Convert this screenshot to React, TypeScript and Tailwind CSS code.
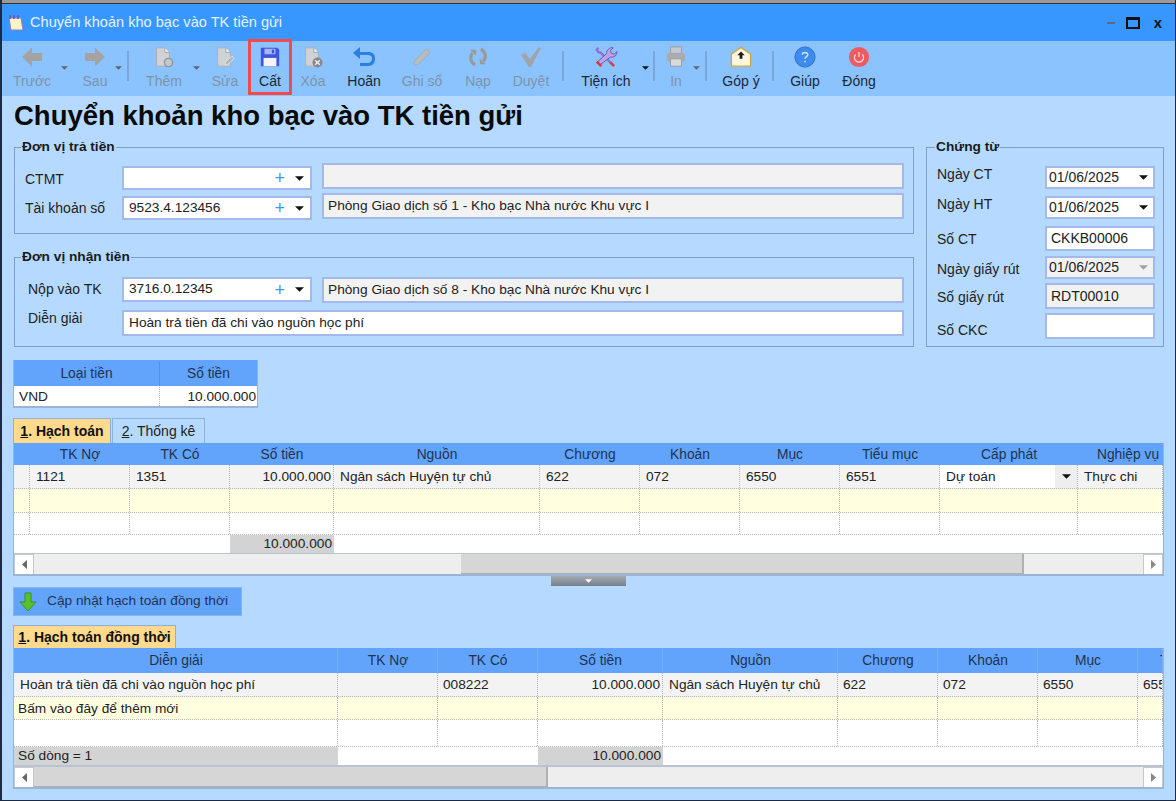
import type { ReactNode } from "react";

const GRAY = "#a3a3a3";

function Caret({ color = "#222", w = 10, h = 5 }: { color?: string; w?: number; h?: number }) {
  return (
    <svg width={w} height={h} viewBox="0 0 10 5" className="shrink-0">
      <polygon points="0,0 10,0 5,5" fill={color} />
    </svg>
  );
}

function DocIcon({ badge }: { badge: ReactNode }) {
  return (
    <svg width="26" height="24" viewBox="0 0 26 24">
      <path d="M5 2h9l5 5v15H5z" fill="#cfd3d6" stroke="#a8adb2" />
      <path d="M14 2v5h5" fill="#f2f2f2" stroke="#9ea3a8" />
      {badge}
    </svg>
  );
}

const icons: Record<string, ReactNode> = {
  back: (
    <svg width="24" height="22" viewBox="0 0 24 22">
      <path d="M2 11 12 1.500V7h10v8H12v5.500z" fill={GRAY} />
    </svg>
  ),
  next: (
    <svg width="24" height="22" viewBox="0 0 24 22">
      <path d="M22 11 12 1.500V7H2v8h10v5.500z" fill={GRAY} />
    </svg>
  ),
  add: <DocIcon badge={<circle cx="18" cy="18" r="4.500" fill="#c4c8cb" stroke="#8f9498" strokeWidth="1.500" />} />,
  edit: <DocIcon badge={<path d="m13 21 1-4 7-6 2 3-7 6z" fill="#b5b5b5" stroke="#e0e0e0" />} />,
  save: (
    <svg width="24" height="24" viewBox="0 0 24 24">
      <path d="M2 2h18l2 2v18H2z" fill="#3d55e0" />
      <rect x="6" y="3" width="12" height="6" fill="#a8b6f2" />
      <rect x="14" y="4" width="2.500" height="4" fill="#3d55e0" />
      <rect x="5" y="13" width="14" height="9" fill="#f3f3f8" />
    </svg>
  ),
  del: (
    <DocIcon
      badge={
        <g>
          <circle cx="18" cy="18" r="5.500" fill="#85898d" />
          <path d="m15.500 15.500 5 5m0-5-5 5" stroke="#eee" strokeWidth="1.500" />
        </g>
      }
    />
  ),
  undo: (
    <svg width="24" height="22" viewBox="0 0 24 22">
      <path d="M8 1 1 7l7 6V9h8c3 0 4 1.500 4 3.500S19 17 16 17H8v3h8c5 0 7-3.500 7-7.500S21 6 16 6H8z" fill="#2a7fe0" />
    </svg>
  ),
  post: (
    <svg width="24" height="24" viewBox="0 0 24 24">
      <path d="M17 3l4 4L8 20l-5 1 1-5z" fill="#b9bcbf" stroke="#a5a8ab" />
    </svg>
  ),
  reload: (
    <svg width="24" height="24" viewBox="0 0 24 24" fill="none" stroke="#999" strokeWidth="3.500">
      <path d="M9 20.500C4 18 2.500 12 6 7.500" />
      <path d="M15 3.500c5 2.500 6.500 8.500 3 13" />
      <path d="M3.500 4h6.500v6.500z" fill="#999" stroke="none" />
      <path d="M20.500 20h-6.500v-6.500z" fill="#999" stroke="none" />
    </svg>
  ),
  check: (
    <svg width="24" height="22" viewBox="0 0 24 22">
      <path d="M2 9l4-2 5 6 9-12 2 1-10 19h-2z" fill="#a0a4a8" />
    </svg>
  ),
  tools: (
    <svg width="26" height="24" viewBox="0 0 26 24">
      <path d="M5 2 3 4l2 3 2 0L20 20" stroke="#8d6fc9" strokeWidth="2.500" fill="none" />
      <path d="m19 17 4 4-2 2-4-4z" fill="#d64545" />
      <path d="M21 2l-3 3 1 3 3 1 3-3c0 4-3 7-7 6L6 21 3 18 14 8c-1-3 3-7 7-6z" fill="#b9a5e6" stroke="#6d4fb0" />
      <path d="m4 16 5 5-2 2-5-5z" fill="#d93a3a" />
    </svg>
  ),
  print: (
    <svg width="24" height="24" viewBox="0 0 24 24">
      <rect x="6" y="1" width="12" height="7" fill="#c6c9cc" stroke="#989c9f" />
      <rect x="2" y="8" width="20" height="9" rx="1" fill="#a9adb0" />
      <rect x="6" y="14" width="12" height="8" fill="#d8dadc" stroke="#989c9f" />
    </svg>
  ),
  mail: (
    <svg width="24" height="24" viewBox="0 0 24 24">
      <path d="M1.500 9 12 1.500 22.500 9v13h-21z" fill="#fdf6dc" stroke="#cfa93e" strokeWidth="1.500" />
      <path d="M12 6l4 4h-2.500v4h-3v-4H8z" fill="#1b1b1b" />
    </svg>
  ),
  help: (
    <svg width="24" height="24" viewBox="0 0 24 24">
      <circle cx="12" cy="12" r="11" fill="#3d8bec" stroke="#2d6fc4" />
      <path d="M9 9.500C9 7.500 10.500 7 12 7s3 .8 3 2.500-3 2.500-3 4.500" fill="none" stroke="#cfe2fb" strokeWidth="1.600" />
      <circle cx="12" cy="17" r="1" fill="#cfe2fb" />
    </svg>
  ),
  off: (
    <svg width="24" height="24" viewBox="0 0 24 24">
      <circle cx="12" cy="12" r="11" fill="#ee5a5e" />
      <path d="M8.500 9a5 5 0 1 0 7 0M12 6.500V12" fill="none" stroke="#fbd5d6" strokeWidth="1.400" />
    </svg>
  ),
};

type ToolItem =
  | { kind: "btn"; w: number; label: string; icon: string; on?: boolean; mark?: boolean }
  | { kind: "arrow"; w: number; dark?: boolean }
  | { kind: "sep"; w: number }
  | { kind: "gap"; w: number };

const toolbar: ToolItem[] = [
  { kind: "gap", w: 4 },
  { kind: "btn", w: 52, label: "Trước", icon: "back" },
  { kind: "arrow", w: 12 },
  { kind: "gap", w: 8 },
  { kind: "btn", w: 34, label: "Sau", icon: "next" },
  { kind: "arrow", w: 12 },
  { kind: "sep", w: 8 },
  { kind: "gap", w: 5 },
  { kind: "btn", w: 54, label: "Thêm", icon: "add" },
  { kind: "arrow", w: 11 },
  { kind: "btn", w: 46, label: "Sửa", icon: "edit" },
  { kind: "btn", w: 44, label: "Cất", icon: "save", on: true, mark: true },
  { kind: "btn", w: 42, label: "Xóa", icon: "del" },
  { kind: "btn", w: 60, label: "Hoãn", icon: "undo", on: true },
  { kind: "btn", w: 56, label: "Ghi sổ", icon: "post" },
  { kind: "btn", w: 56, label: "Nạp", icon: "reload" },
  { kind: "btn", w: 50, label: "Duyệt", icon: "check" },
  { kind: "sep", w: 14 },
  { kind: "btn", w: 72, label: "Tiện ích", icon: "tools", on: true },
  { kind: "arrow", w: 7, dark: true },
  { kind: "sep", w: 10 },
  { kind: "btn", w: 34, label: "In", icon: "print" },
  { kind: "arrow", w: 6 },
  { kind: "sep", w: 14 },
  { kind: "btn", w: 56, label: "Góp ý", icon: "mail", on: true },
  { kind: "sep", w: 8 },
  { kind: "btn", w: 56, label: "Giúp", icon: "help", on: true },
  { kind: "btn", w: 52, label: "Đóng", icon: "off", on: true },
];

function Toolbar() {
  return (
    <div className="flex h-[55px] shrink-0 bg-[#8ac3ff]">
      {toolbar.map((t, i) => {
        if (t.kind === "gap") return <div key={i} style={{ width: t.w }} />;
        if (t.kind === "sep")
          return (
            <div key={i} style={{ width: t.w }} className="flex justify-center pt-[10px]">
              <div className="h-[30px] w-[2px] bg-[#7ba6d6]" />
            </div>
          );
        if (t.kind === "arrow")
          return (
            <div key={i} style={{ width: t.w }} className="flex justify-center pt-[25px]">
              <Caret w={7} h={4} color={t.dark ? "#111" : "#5d6670"} />
            </div>
          );
        return (
          <div
            key={i}
            style={{ width: t.w }}
            className={`flex shrink-0 flex-col items-center ${t.mark ? "-mt-[2px] h-[56px] border-[3px] border-[#f44a4a] pt-[3px]" : "h-[55px] pt-[4px]"}`}
          >
            <div className="flex h-[24px] items-center justify-center [&>svg]:h-[22px] [&>svg]:w-auto">{icons[t.icon]}</div>
            <span className={`mt-[3px] whitespace-nowrap text-[14px] leading-[18px] ${t.on ? "text-[#1c2733]" : "text-[#7f93a8]"}`}>
              {t.label}
            </span>
          </div>
        );
      })}
    </div>
  );
}

function Group({ title, className, legend = "left-[6px]", children }: { title: string; className: string; legend?: string; children: ReactNode }) {
  return (
    <div className={`relative border border-[#7f9fc9] ${className}`}>
      <span className={`absolute -top-[9px] bg-[#b6daff] px-[1px] text-[13.7px] font-bold leading-[16px] text-[#1a1a1a] ${legend}`}>
        {title}
      </span>
      {children}
    </div>
  );
}

function Combo({ value, h }: { value: string; h: string }) {
  return (
    <div className={`flex w-[190px] items-center border-2 border-[#a4b8ea] bg-white pl-[5px] text-[13.7px] text-[#222] ${h}`}>
      <span className="flex-1">{value}</span>
      <span className="mr-[10px] text-[18px] font-light leading-none text-[#3f9ae8]">+</span>
      <span className="mr-[6px]">
        <Caret w={9} h={5} color="#111" />
      </span>
    </div>
  );
}

function ReadBox({ value }: { value: string }) {
  return (
    <div className="ml-[10px] flex h-[26px] w-[582px] items-center border-2 border-[#a4b8ea] bg-[#f2f2f2] pl-[4px] pt-[1px] text-[13.7px] text-[#222]">
      {value}
    </div>
  );
}

const voucherRows = [
  { label: "Ngày CT", value: "01/06/2025", box: "h-[23px]", rowGap: "mt-0", labelShift: "mb-[7px]", caret: "#111" },
  { label: "Ngày HT", value: "01/06/2025", box: "h-[23px]", rowGap: "mt-[7px]", labelShift: "mb-[7px]", caret: "#111" },
  { label: "Số CT", value: "CKKB00006", box: "h-[25px]", rowGap: "mt-[7px]", labelShift: "mb-0", pad: true },
  { label: "Ngày giấy rút", value: "01/06/2025", box: "h-[23px]", rowGap: "mt-[5px]", labelShift: "mt-[3px]", caret: "#a0a0a0", gray: true },
  { label: "Số giấy rút", value: "RDT00010", box: "h-[26px]", rowGap: "mt-[4px]", labelShift: "mt-[2px]", gray: true, pad: true },
  { label: "Số CKC", value: "", box: "h-[26px]", rowGap: "mt-[4px]", labelShift: "mt-[8px]" },
];

function VoucherGroup() {
  return (
    <Group title="Chứng từ" legend="left-[8px]" className="h-[200px] w-[238px] pl-[10px] pt-[18px]">
      {voucherRows.map((r) => (
        <div key={r.label} className={`flex items-center ${r.rowGap}`}>
          <span className={`w-[108px] text-[14px] leading-[16px] text-[#222] ${r.labelShift}`}>{r.label}</span>
          <div
            className={`flex w-[110px] items-center border-2 border-[#a4b8ea] text-[14px] text-[#222] ${r.box} ${r.gray ? "bg-[#f2f2f2]" : "bg-white"} ${r.pad ? "pl-[4px]" : "pl-[2px]"}`}
          >
            <span className="flex-1">{r.value}</span>
            {r.caret && (
              <span className="mr-[5px]">
                <Caret w={9} h={5} color={r.caret} />
              </span>
            )}
          </div>
        </div>
      ))}
    </Group>
  );
}

function Tab({ label, num, active, w }: { label: string; num: string; active?: boolean; w: string }) {
  return (
    <div
      className={`flex h-full items-center justify-center whitespace-nowrap border-x border-t border-[#8fb0dc] text-[14px] ${w} ${active ? "bg-[#ffd98c] font-bold text-[#111]" : "bg-[#b6daff] text-[#222]"}`}
    >
      <span className="underline">{num}</span>
      <span>. {label}</span>
    </div>
  );
}

type Col = { w: number; title?: string; inner?: number };

function HeadRow({ cols, sep }: { cols: Col[]; sep?: boolean }) {
  return (
    <div className="flex h-full shrink-0 bg-[#62a3fb]">
      {cols.map((c, i) => (
        <div
          key={i}
          style={{ width: c.w }}
          className={`flex h-full shrink-0 items-center overflow-hidden whitespace-nowrap pt-[2px] text-[13.8px] text-[#1f3350] ${sep ? "border-r border-[#78aef5]" : ""}`}
        >
          <span style={{ width: c.inner ?? c.w }} className="shrink-0 text-center">
            {c.title}
          </span>
        </div>
      ))}
    </div>
  );
}

function DataRow({ cols, cells, bg, h }: { cols: Col[]; cells: Record<number, ReactNode>; bg: string; h: string }) {
  return (
    <div className={`flex shrink-0 border-b border-dotted border-[#b5b5b5] ${bg} ${h}`}>
      {cols.map((c, i) => (
        <div
          key={i}
          style={{ width: c.w }}
          className="flex shrink-0 items-center overflow-hidden whitespace-nowrap border-r border-dotted border-[#b5b5b5] text-[13.7px] text-[#222]"
        >
          {cells[i]}
        </div>
      ))}
    </div>
  );
}

function ScrollBar({ before, thumb }: { before: string; thumb: string }) {
  return (
    <div className="flex h-[22px] shrink-0 items-stretch border-t border-[#b8c4d4] bg-[#eeeeee]">
      <div className="flex w-[20px] shrink-0 items-center justify-center border border-[#c8c8c8] bg-white">
        <svg width="5" height="9" viewBox="0 0 5 9">
          <polygon points="5,0 5,9 0,4.500" fill="#666" />
        </svg>
      </div>
      <div className={`shrink-0 ${before}`} />
      <div className={`shrink-0 border-b-2 border-r-2 border-[#b0b0b0] bg-[#d6d6d6] ${thumb}`} />
      <div className="flex-1" />
      <div className="flex w-[20px] shrink-0 items-center justify-center border border-[#c8c8c8] bg-white">
        <svg width="5" height="9" viewBox="0 0 5 9">
          <polygon points="0,0 0,9 5,4.500" fill="#888" />
        </svg>
      </div>
    </div>
  );
}

const gridCols: Col[] = [
  { w: 16 },
  { w: 100, title: "TK Nợ" },
  { w: 100, title: "TK Có" },
  { w: 104, title: "Số tiền" },
  { w: 206, title: "Nguồn" },
  { w: 100, title: "Chương" },
  { w: 100, title: "Khoản" },
  { w: 100, title: "Mục" },
  { w: 100, title: "Tiểu mục" },
  { w: 138, title: "Cấp phát" },
  { w: 85, title: "Nghiệp vụ", inner: 100 },
];

const syncCols: Col[] = [
  { w: 324, title: "Diễn giải" },
  { w: 100, title: "TK Nợ" },
  { w: 100, title: "TK Có" },
  { w: 125, title: "Số tiền" },
  { w: 175, title: "Nguồn" },
  { w: 100, title: "Chương" },
  { w: 100, title: "Khoản" },
  { w: 100, title: "Mục" },
  { w: 25, title: "Tiểu mục", inner: 100 },
];

function Cell({ children, right, wide }: { children: ReactNode; right?: boolean; wide?: boolean }) {
  if (right) return <span className="w-full pr-[2px] pt-[2px] text-right">{children}</span>;
  return <span className={`pt-[2px] ${wide ? "pl-[6px]" : "pl-[5px]"}`}>{children}</span>;
}

function MainGrid() {
  return (
    <div className="ml-[11px] flex h-[133px] w-[1151px] flex-col overflow-hidden border-x border-b-2 border-[#9bb4d6] bg-white">
      <div className="h-[22px] shrink-0">
        <HeadRow cols={gridCols} />
      </div>
      <DataRow
        cols={gridCols}
        bg="bg-[#f3f3f3]"
        h="h-[24px]"
        cells={{
          1: <Cell wide>1121</Cell>,
          2: <Cell wide>1351</Cell>,
          3: <Cell right>10.000.000</Cell>,
          4: <Cell wide>Ngân sách Huyện tự chủ</Cell>,
          5: <Cell wide>622</Cell>,
          6: <Cell wide>072</Cell>,
          7: <Cell wide>6550</Cell>,
          8: <Cell wide>6551</Cell>,
          9: (
            <div className="flex h-full w-full items-center bg-white">
              <span className="flex-1 pl-[6px] pt-[2px]">Dự toán</span>
              <span className="flex h-full w-[22px] items-center justify-center bg-[#eeeeee]">
                <Caret w={9} h={5} color="#111" />
              </span>
            </div>
          ),
          10: <Cell wide>Thực chi</Cell>,
        }}
      />
      <DataRow cols={gridCols} bg="bg-[#ffffe0]" h="h-[24px]" cells={{}} />
      <DataRow cols={gridCols} bg="bg-white" h="h-[22px]" cells={{}} />
      <div className="flex h-[18px] shrink-0 bg-white text-[13.7px] text-[#222]">
        <div className="w-[216px]" />
        <div className="flex w-[104px] items-center justify-end bg-[#d3d3d3] pr-[2px]">10.000.000</div>
      </div>
      <ScrollBar before="w-[427px]" thumb="w-[563px]" />
    </div>
  );
}

function SyncGrid() {
  return (
    <div className="ml-[11px] flex h-[141px] w-[1151px] flex-col overflow-hidden border-x border-b-2 border-[#9bb4d6] bg-white">
      <div className="h-[25px] shrink-0">
        <HeadRow cols={syncCols} sep />
      </div>
      <DataRow
        cols={syncCols}
        bg="bg-[#f3f3f3]"
        h="h-[24px]"
        cells={{
          0: <Cell wide>Hoàn trả tiền đã chi vào nguồn học phí</Cell>,
          2: <Cell>008222</Cell>,
          3: <Cell right>10.000.000</Cell>,
          4: <Cell wide>Ngân sách Huyện tự chủ</Cell>,
          5: <Cell>622</Cell>,
          6: <Cell>072</Cell>,
          7: <Cell>6550</Cell>,
          8: <Cell>6551</Cell>,
        }}
      />
      <DataRow
        cols={syncCols}
        bg="bg-[#ffffe0]"
        h="h-[23px]"
        cells={{ 0: <span className="pl-[4px] pt-[2px]">Bấm vào đây để thêm mới</span> }}
      />
      <DataRow cols={syncCols} bg="bg-white" h="h-[27px]" cells={{}} />
      <div className="flex h-[19px] shrink-0 border-b border-[#b8c4d4] bg-white text-[13.7px] text-[#222]">
        <div className="flex w-[324px] items-center bg-[#d3d3d3] pl-[4px]">Số dòng = 1</div>
        <div className="w-[200px]" />
        <div className="flex w-[125px] items-center justify-end bg-[#d3d3d3] pr-[2px]">10.000.000</div>
      </div>
      <ScrollBar before="w-0" thumb="w-[514px]" />
    </div>
  );
}

export default function App() {
  return (
    <div
      className="flex h-[801px] w-[1176px] flex-col overflow-hidden border-b border-l-2 border-r border-[#1c2a44] bg-[#b6daff]"
      style={{ fontFamily: '"Liberation Sans", Arial, sans-serif' }}
    >
      <div className="h-[4px] shrink-0 border-b border-[#333] bg-[#9a9a9a]" />
      <div className="flex h-[37px] shrink-0 items-center bg-[#3797ff]">
        <svg width="20" height="20" viewBox="0 0 20 20" className="ml-[4px]">
          <path d="M3 5h12l2 12H5z" fill="#fbf3c8" stroke="#8f80c0" />
          <path d="M4 2v4M8 2v4M12 2v4" stroke="#6a4fb5" strokeWidth="1.500" />
        </svg>
        <span className="ml-[4px] flex-1 text-[14.6px] text-[#e6f2ff]">Chuyển khoản kho bạc vào TK tiền gửi</span>
        <div className="h-[2px] w-[8px] bg-[#5f6b78]" />
        <div className="ml-[11px] h-[12px] w-[14px] border-2 border-t-[3px] border-[#111]" />
        <span className="ml-[14px] mr-[13px] text-[15px] font-bold leading-none text-[#111]">x</span>
      </div>
      <Toolbar />

      <div className="h-[51px] shrink-0 pl-[12px] pt-[3px] text-[27.5px] font-bold leading-[34px] text-[#0a0a0a]">
        Chuyển khoản kho bạc vào TK tiền gửi
      </div>

      <div className="flex shrink-0 gap-[12px] pl-[12px]">
        <div className="flex w-[900px] flex-col gap-[23px]">
          <Group title="Đơn vị trả tiền" className="h-[87px] pt-[15px]">
            <div className="flex h-[30px]">
              <span className="mt-[4px] flex h-[24px] w-[107px] items-center pl-[10px] text-[14px] text-[#222]">CTMT</span>
              <div className="mt-[3px]">
                <Combo value="" h="h-[24px]" />
              </div>
              <ReadBox value="" />
            </div>
            <div className="flex h-[30px]">
              <span className="mt-[3px] flex h-[24px] w-[107px] items-center pl-[10px] text-[14px] text-[#222]">Tài khoản số</span>
              <div className="mt-[3px]">
                <Combo value="9523.4.123456" h="h-[24px]" />
              </div>
              <ReadBox value="Phòng Giao dịch số 1 - Kho bạc Nhà nước Khu vực I" />
            </div>
          </Group>
          <Group title="Đơn vị nhận tiền" className="h-[90px] pt-[19px]">
            <div className="flex h-[33px]">
              <span className="flex h-[25px] w-[107px] items-center pl-[13px] text-[14px] text-[#222]">Nộp vào TK</span>
              <Combo value="3716.0.12345" h="h-[25px]" />
              <ReadBox value="Phòng Giao dịch số 8 - Kho bạc Nhà nước Khu vực I" />
            </div>
            <div className="flex">
              <span className="flex h-[16px] w-[107px] items-center pl-[13px] text-[14px] text-[#222]">Diễn giải</span>
              <div className="flex h-[26px] w-[782px] items-center border-2 border-[#a4b8ea] bg-white pl-[5px] text-[13.7px] text-[#222]">
                Hoàn trả tiền đã chi vào nguồn học phí
              </div>
            </div>
          </Group>
        </div>
        <VoucherGroup />
      </div>

      <div className="ml-[11px] mt-[13px] flex h-[48px] w-[245px] shrink-0 flex-col border-x border-b-2 border-[#9bb4d6] bg-white">
        <div className="flex h-[26px] shrink-0 bg-[#62a3fb] pt-[2px] text-[13.8px] text-[#1f3350]">
          <div className="flex w-[146px] items-center justify-center border-r border-[#5590e0]">Loại tiền</div>
          <div className="flex flex-1 items-center justify-center">Số tiền</div>
        </div>
        <div className="flex flex-1 pt-[1px] text-[13.7px] text-[#222]">
          <div className="flex w-[146px] items-center border-r border-dotted border-[#b5b5b5] pl-[5px]">VND</div>
          <div className="flex flex-1 items-center justify-end pr-[1px]">10.000.000</div>
        </div>
      </div>

      <div className="ml-[11px] mt-[10px] flex h-[25px] shrink-0 gap-[1px]">
        <Tab num="1" label="Hạch toán" active w="w-[98px]" />
        <Tab num="2" label="Thống kê" w="w-[93px]" />
      </div>
      <MainGrid />

      <div className="ml-[549px] flex h-[10px] w-[75px] shrink-0 items-center justify-center bg-gradient-to-b from-[#a3aab3] to-[#77808c]">
        <Caret w={7} h={4} color="#fff" />
      </div>

      <div className="ml-[11px] mt-[1px] flex h-[29px] w-[229px] shrink-0 items-center border border-[#86b4ee] bg-[#62a3fb] pl-[4px] text-[13.7px] text-[#1f3350]">
        <svg width="20" height="20" viewBox="0 0 20 20">
          <path d="M7 1h6v9h5l-8 9-8-9h5z" fill="#58c22a" stroke="#2f8a18" strokeWidth="0.800" />
        </svg>
        <span className="ml-[9px]">Cập nhật hạch toán đồng thời</span>
      </div>

      <div className="ml-[11px] mt-[9px] flex h-[23px] shrink-0">
        <Tab num="1" label="Hạch toán đồng thời" active w="w-[163px]" />
      </div>
      <SyncGrid />
    </div>
  );
}
